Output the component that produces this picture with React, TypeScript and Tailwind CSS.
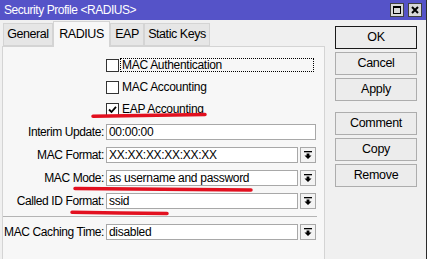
import React from 'react';

const DropIcon = () => (
  <svg width="8" height="8" viewBox="0 0 8 8">
    <rect x="0" y="0" width="8" height="1.3" fill="#000" />
    <path d="M2.6 2.4h2.8v2h2.1L4 7.9 0.5 4.4h2.1z" fill="#000" />
  </svg>
);

const Checkbox = ({ checked }: { checked?: boolean }) => (
  <div className="w-[13px] h-[13px] shrink-0 bg-white border border-[#333] flex items-center justify-center">
    {checked && (
      <svg width="9" height="9" viewBox="0 0 9 9">
        <path d="M1 4.5 L3.5 7 L8 1.8" stroke="#000" strokeWidth="1.8" fill="none" />
      </svg>
    )}
  </div>
);

const Field = ({ label, value, drop }: { label: string; value: string; drop?: boolean }) => (
  <div className="flex items-center h-[16px]">
    <div className="w-[101px] flex justify-end text-[12px] tracking-[-0.4px] leading-none whitespace-nowrap">{label}</div>
    <div
      className={`ml-[2px] shrink-0 h-[16px] bg-white border border-[#a8a8a8] flex items-center pl-[2px] text-[12px] tracking-[-0.3px] leading-none whitespace-nowrap overflow-hidden ${
        drop ? 'w-[192px]' : 'w-[210px]'
      }`}
    >
      {value}
    </div>
    {drop && (
      <div className="ml-[2px] shrink-0 w-[16px] h-[16px] bg-[#f3f3f3] border border-[#a8a8a8] flex items-center justify-center">
        <DropIcon />
      </div>
    )}
  </div>
);

const Btn = ({ label, primary }: { label: string; primary?: boolean }) => (
  <div
    className={`w-[82px] h-[23px] flex items-center justify-center text-[12.5px] tracking-[-0.3px] leading-none bg-[#ececec] border ${
      primary ? 'border-[#1a1a1a]' : 'border-[#adadad]'
    }`}
  >
    {label}
  </div>
);

export default function App() {
  const tabs = [
    { name: 'General', w: 'w-[50px]' },
    { name: 'RADIUS', w: 'w-[57px]', active: true },
    { name: 'EAP', w: 'w-[34px]' },
    { name: 'Static Keys', w: 'w-[66px]' },
  ];

  return (
    <div className="relative w-[428px] h-[259px] overflow-hidden bg-white text-black font-['Liberation_Sans',Arial,sans-serif]">
      <div className="w-[427px] h-full flex flex-col bg-[#f0f0f0] border-r border-[#2b2b2b]">
        {/* title bar */}
        <div className="h-[20px] shrink-0 bg-[#5553c8] flex items-center justify-between pl-[4px] pr-[4px]">
          <span className="text-white text-[12px] tracking-[-0.45px] leading-none">Security Profile &lt;RADIUS&gt;</span>
          <div className="flex gap-[4px]">
            <div className="w-[14px] h-[14px] bg-[#d8d8d8] border border-[#404040] flex items-center justify-center">
              <div className="w-[8px] h-[8px] border border-[#000] border-t-2" />
            </div>
            <div className="w-[14px] h-[14px] bg-[#d8d8d8] border border-[#404040] flex items-center justify-center">
              <svg width="8" height="8" viewBox="0 0 8 8">
                <path d="M1 1 L7 7 M7 1 L1 7" stroke="#000" strokeWidth="2" />
              </svg>
            </div>
          </div>
        </div>

        <div className="flex flex-1 min-h-0">
          {/* left: tabs + panel */}
          <div className="w-[325px] pl-[2px] flex flex-col">
            <div className="h-[26px] shrink-0 flex items-end pl-[1px]">
              {tabs.map((t) =>
                t.active ? (
                  <div
                    key={t.name}
                    className={`${t.w} h-[26px] -mb-px relative z-10 bg-[#f7f7f7] border-l border-t border-r border-[#d4d4d4] flex items-center justify-center text-[12.5px] tracking-[-0.45px] leading-none whitespace-nowrap`}
                  >
                    {t.name}
                  </div>
                ) : (
                  <div
                    key={t.name}
                    className={`${t.w} h-[23px] bg-[#e6e6e6] border border-[#d4d4d4] flex items-center justify-center text-[12.5px] tracking-[-0.45px] leading-none whitespace-nowrap`}
                  >
                    {t.name}
                  </div>
                )
              )}
            </div>

            <div className="flex-1 bg-[#f7f7f7] border-l border-t border-r border-[#d4d4d4] pt-[7px]">
              <div className="flex flex-col pl-[103px]">
                <div className="h-[22px] flex items-center">
                  <Checkbox />
                  <span className="ml-[1px] w-[194px] h-[14px] border border-dotted border-[#000] px-[1px] flex items-center text-[12px] tracking-[-0.3px] leading-none">
                    MAC Authentication
                  </span>
                </div>
                <div className="h-[22px] flex items-center">
                  <Checkbox />
                  <span className="ml-[1px] h-[14px] border border-transparent px-[1px] flex items-center text-[12px] tracking-[-0.3px] leading-none">
                    MAC Accounting
                  </span>
                </div>
                <div className="h-[22px] flex items-center">
                  <Checkbox checked />
                  <span className="ml-[1px] h-[14px] border border-transparent px-[1px] flex items-center text-[12px] tracking-[-0.3px] leading-none">
                    EAP Accounting
                  </span>
                </div>
              </div>

              <div className="mt-[4px] flex flex-col gap-[7px]">
                <Field label="Interim Update:" value="00:00:00" />
                <Field label="MAC Format:" value="XX:XX:XX:XX:XX:XX" drop />
                <Field label="MAC Mode:" value="as username and password" drop />
                <Field label="Called ID Format:" value="ssid" drop />
              </div>

              <div className="mt-[7px] w-[314px] h-px bg-[#b4b4b4]" />

              <div className="mt-[7px]">
                <Field label="MAC Caching Time:" value="disabled" drop />
              </div>
            </div>
          </div>

          {/* right: buttons */}
          <div className="pl-[10px] pt-[6px] flex flex-col gap-[3px]">
            <Btn label="OK" primary />
            <Btn label="Cancel" />
            <Btn label="Apply" />
            <div className="h-[5px]" />
            <Btn label="Comment" />
            <Btn label="Copy" />
            <Btn label="Remove" />
          </div>
        </div>
      </div>

      {/* hand-drawn red annotations */}
      <svg className="absolute inset-0 pointer-events-none" width="428" height="259" viewBox="0 0 428 259">
        <path d="M93 116.3 Q150 115.2 205 114.6" stroke="#e2101f" strokeWidth="3.5" strokeLinecap="round" fill="none" />
        <path d="M75 188.6 Q160 189.6 251 190" stroke="#e2101f" strokeWidth="3.5" strokeLinecap="round" fill="none" />
        <path d="M72 212.3 Q120 213.2 167 213.4" stroke="#e2101f" strokeWidth="3.5" strokeLinecap="round" fill="none" />
      </svg>
    </div>
  );
}
